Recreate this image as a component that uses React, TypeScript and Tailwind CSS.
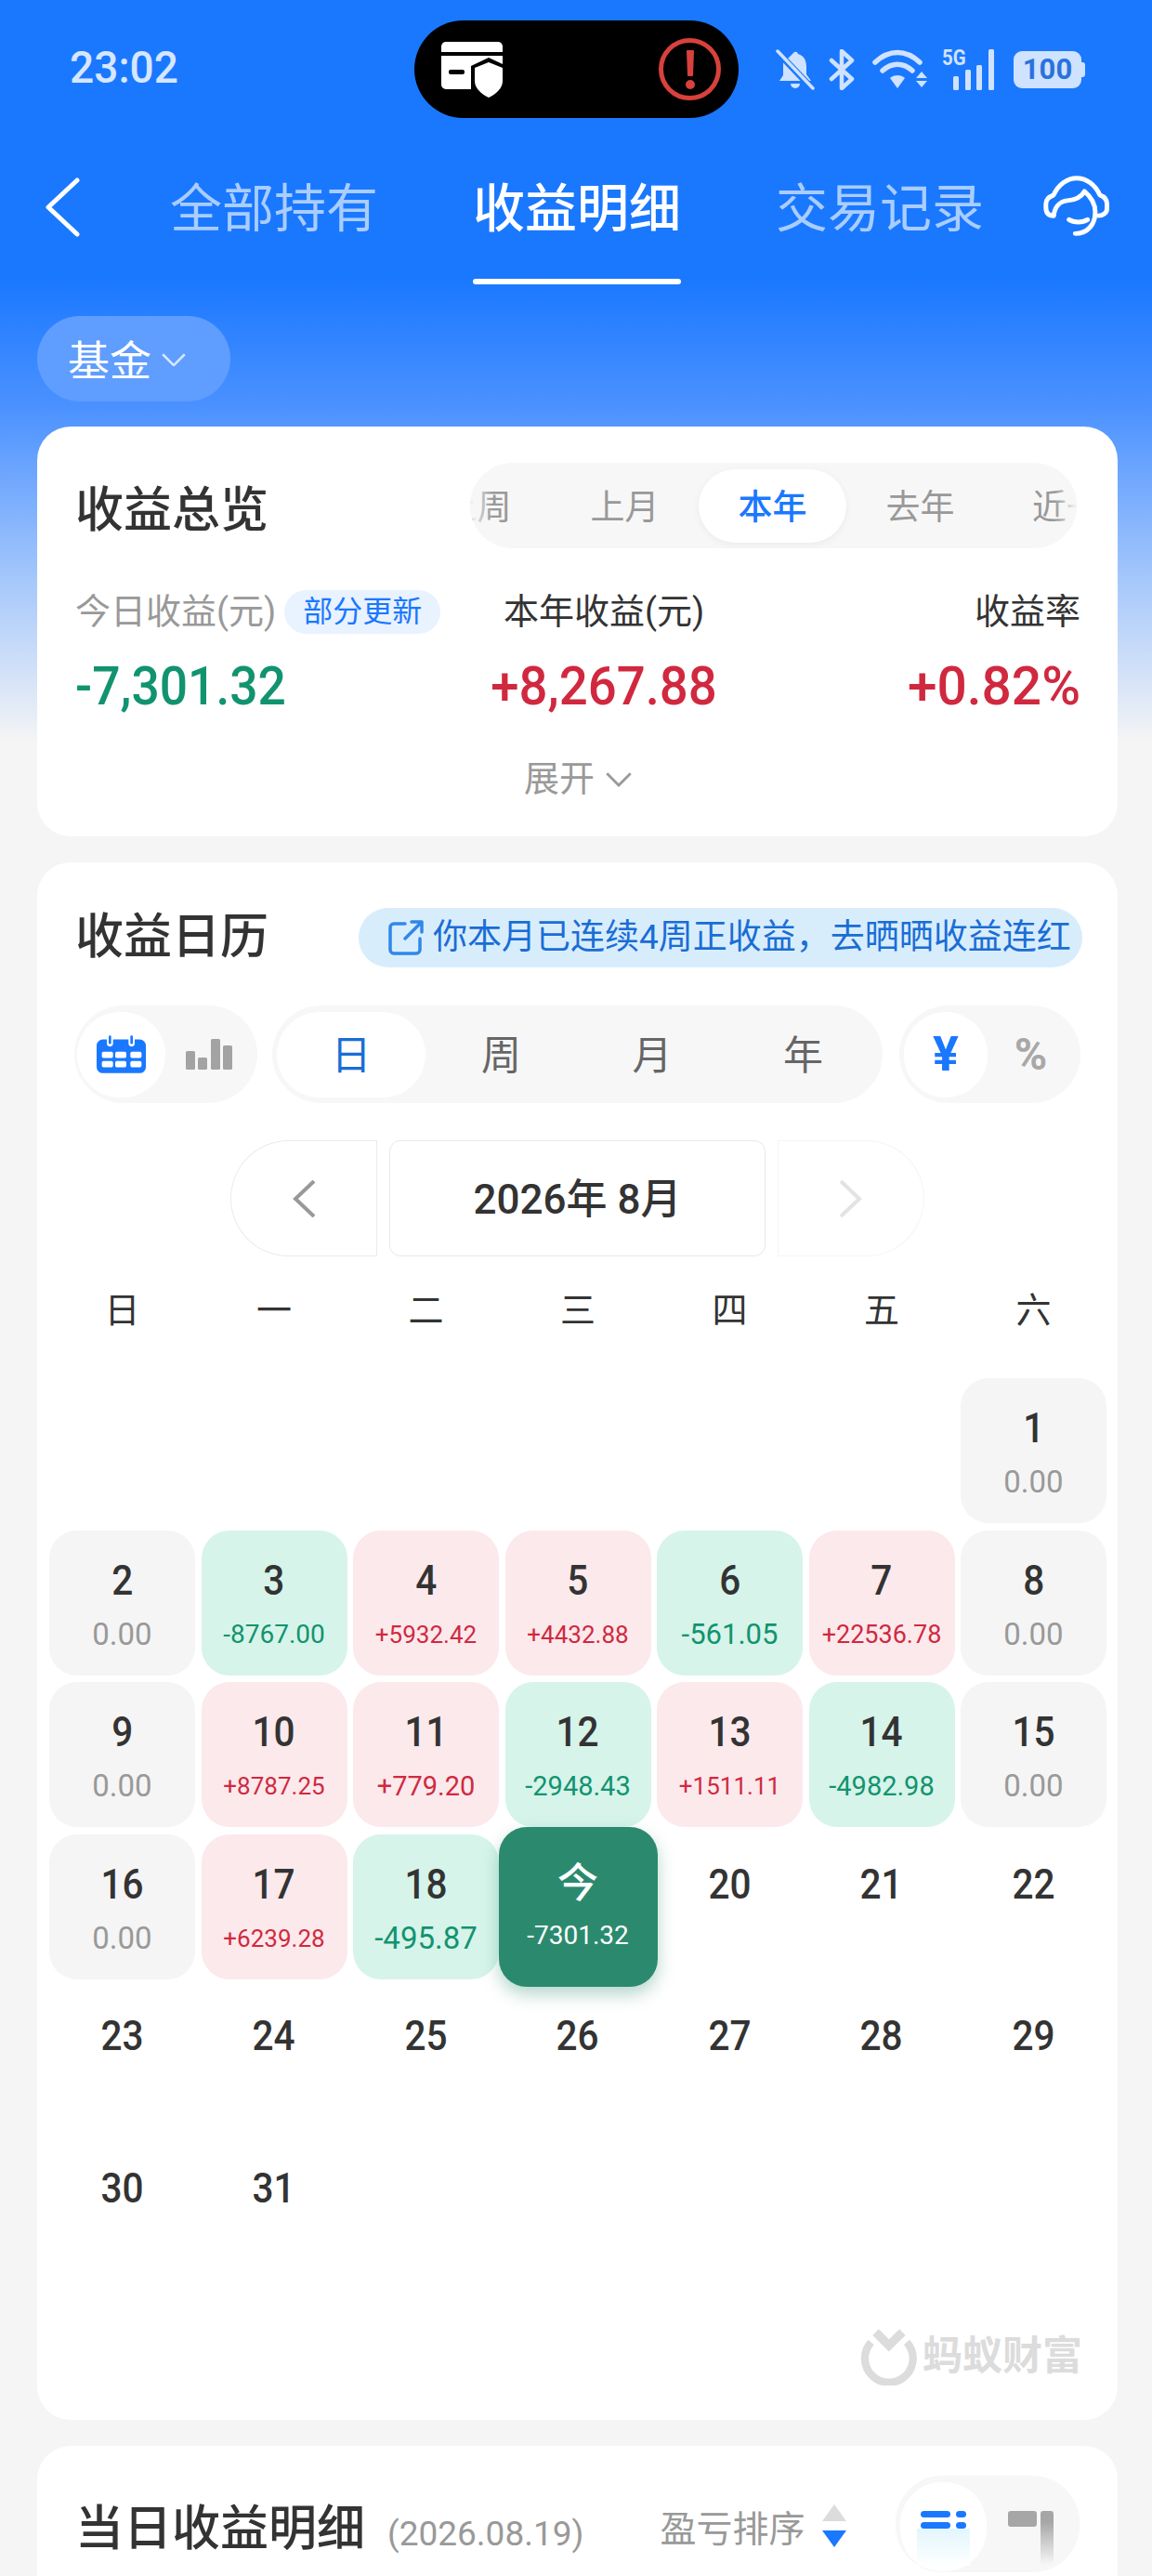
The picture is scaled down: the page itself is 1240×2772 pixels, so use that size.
const cjk = 'font-["Roboto","Noto_Sans_CJK_SC",sans-serif]';

type Day = { d: string; v?: string; kind?: 'gray' | 'red' | 'green' | 'today' | 'none'; size?: string };

const days: (Day | null)[] = [
  null, null, null, null, null, null,
  { d: '1', v: '0.00', kind: 'gray', size: 'text-[33px]' },
  { d: '2', v: '0.00', kind: 'gray', size: 'text-[33px]' },
  { d: '3', v: '-8767.00', kind: 'green', size: 'text-[28px]' },
  { d: '4', v: '+5932.42', kind: 'red', size: 'text-[26px]' },
  { d: '5', v: '+4432.88', kind: 'red', size: 'text-[26px]' },
  { d: '6', v: '-561.05', kind: 'green', size: 'text-[31px]' },
  { d: '7', v: '+22536.78', kind: 'red', size: 'text-[27px]' },
  { d: '8', v: '0.00', kind: 'gray', size: 'text-[33px]' },
  { d: '9', v: '0.00', kind: 'gray', size: 'text-[33px]' },
  { d: '10', v: '+8787.25', kind: 'red', size: 'text-[26px]' },
  { d: '11', v: '+779.20', kind: 'red', size: 'text-[29px]' },
  { d: '12', v: '-2948.43', kind: 'green', size: 'text-[29px]' },
  { d: '13', v: '+1511.11', kind: 'red', size: 'text-[26px]' },
  { d: '14', v: '-4982.98', kind: 'green', size: 'text-[29px]' },
  { d: '15', v: '0.00', kind: 'gray', size: 'text-[33px]' },
  { d: '16', v: '0.00', kind: 'gray', size: 'text-[33px]' },
  { d: '17', v: '+6239.28', kind: 'red', size: 'text-[26px]' },
  { d: '18', v: '-495.87', kind: 'green', size: 'text-[33px]' },
  { d: '今', v: '-7301.32', kind: 'today', size: 'text-[28px]' },
  ...['20', '21', '22', '23', '24', '25', '26', '27', '28', '29', '30', '31'].map((d) => ({ d, kind: 'none' as const })),
];

function DayCell({ day }: { day: Day | null }) {
  if (!day) return <div />;
  if (day.kind === 'today') {
    return (
      <div className="relative z-10 -mx-[7px] -my-[8px] flex flex-col items-center rounded-[30px] bg-[#2b8a6e] pt-[36px] text-white shadow-[0_8px_18px_rgba(43,138,110,0.35)]">
        <div className="text-[44px] leading-[50px] font-medium">{day.d}</div>
        <div className={`mt-[11px] leading-[40px] ${day.size}`}>{day.v}</div>
      </div>
    );
  }
  const tone =
    day.kind === 'gray'
      ? 'bg-[#f5f5f5] text-[#999999]'
      : day.kind === 'red'
        ? 'bg-[#fce9ec] text-[#d0293f]'
        : day.kind === 'green'
          ? 'bg-[#d6f4ea] text-[#12936f]'
          : 'text-[#333333]';
  return (
    <div className={`flex flex-col items-center rounded-[30px] pt-[29px] ${tone}`}>
      <div className="scale-x-[0.9] text-[45px] leading-[50px] font-medium text-[#333333]">{day.d}</div>
      {day.v && <div className={`mt-[13px] leading-[40px] ${day.size}`}>{day.v}</div>}
    </div>
  );
}

function CardShield() {
  return (
    <svg width="66" height="60" viewBox="0 0 66 60" className="shrink-0">
      <path d="M5 0h56a5 5 0 0 1 5 5v6H0V5a5 5 0 0 1 5-5z" fill="#fff" />
      <path d="M0 15h66v9l-15-7-19 9v25H5a5 5 0 0 1-5-5z" fill="#fff" />
      <rect x="8" y="30" width="17" height="5" rx="2" fill="#000" />
      <path d="M51 22l15 6v14c0 8-7 14-15 18-8-4-15-10-15-18V28z" fill="#fff" />
    </svg>
  );
}

function StatusIcons() {
  return (
    <div className="flex items-center text-[#cfe2ff]">
      <svg width="42" height="44" viewBox="0 0 42 44" className="shrink-0">
        <path d="M20 3a3 3 0 0 1 4 2c7 2 9 8 9 14v8l5 7H4l4-6V15z" fill="#cfe2ff" />
        <path d="M16 37h10a5 5 0 0 1-10 0z" fill="#cfe2ff" />
        <path d="M1 2l38 40" stroke="#1a78ff" strokeWidth="7" />
        <path d="M2 2l38 40" stroke="#cfe2ff" strokeWidth="3.5" strokeLinecap="round" />
      </svg>
      <svg width="28" height="44" viewBox="0 0 28 44" className="ml-[15px] shrink-0">
        <path d="M3 12l22 20-11 10V2l11 10L3 32" fill="none" stroke="#cfe2ff" strokeWidth="4.5" strokeLinecap="round" strokeLinejoin="round" />
      </svg>
      <svg width="60" height="44" viewBox="0 0 60 44" className="ml-[19px] shrink-0">
        <path d="M3 14c15-14 33-14 48 0" fill="none" stroke="#cfe2ff" strokeWidth="5.5" strokeLinecap="round" />
        <path d="M11 23c10-9 22-9 32 0" fill="none" stroke="#cfe2ff" strokeWidth="5.5" strokeLinecap="round" />
        <path d="M27 28c3 0 6 1 8 3l-8 11-8-11c2-2 5-3 8-3z" fill="#cfe2ff" />
        <path d="M53 24l6 7H47zM47 34h12l-6 7z" fill="#cfe2ff" />
      </svg>
      <div className="relative ml-[15px] h-[44px] w-[57px] shrink-0">
        <span className="absolute -top-[2px] left-0 origin-left scale-x-[0.85] font-['Roboto',sans-serif] text-[24px] leading-[22px] font-bold">5G</span>
        <svg width="57" height="44" viewBox="0 0 57 44" className="absolute left-0 top-0">
          <rect x="12" y="29" width="6" height="15" rx="1.5" fill="#cfe2ff" />
          <rect x="25" y="22" width="6" height="22" rx="1.5" fill="#cfe2ff" />
          <rect x="37" y="17" width="6" height="27" rx="1.5" fill="#cfe2ff" />
          <rect x="50" y="0" width="6" height="44" rx="1.5" fill="#cfe2ff" />
        </svg>
      </div>
      <div className="relative ml-[20px] flex h-[40px] w-[73px] shrink-0 items-center justify-center rounded-[9px] bg-[#cfe2ff] font-['Roboto',sans-serif] text-[31px] leading-[40px] font-bold text-[#2a72dc]">
        100
        <span className="absolute -right-[4px] top-[12px] h-[16px] w-[4px] rounded-r-[3px] bg-[#cfe2ff]" />
      </div>
    </div>
  );
}

function Headset() {
  return (
    <svg width="80" height="73" viewBox="60 45 240 220" fill="none" stroke="#fff" strokeWidth="15" strokeLinecap="round" strokeLinejoin="round" className="shrink-0">
      <path d="M105 187C85 187 80 175 80 160V148C80 132 92 125 105 120C120 85 150 65 180 65C210 65 240 85 255 120C268 125 278 132 278 148V165C278 178 265 187 250 187" />
      <path d="M105 187C108 165 120 140 150 138C175 136 195 125 205 108C225 125 240 150 240 175C240 215 215 245 175 245" />
      <path d="M155 200C170 210 200 210 215 200" />
    </svg>
  );
}

function Chevron({ className, color, size = 22 }: { className?: string; color: string; size?: number }) {
  return (
    <svg width={size} height={size * 0.55} viewBox="0 0 22 12" fill="none" stroke={color} strokeWidth="2.2" className={className}>
      <path d="M1 1l10 10L21 1" />
    </svg>
  );
}

function AntLogo() {
  return (
    <svg width="67" height="63" viewBox="40 40 200 190" fill="none" className="shrink-0">
      <path d="M80 90A78 78 0 1 0 196 90" stroke="#dcdcdc" strokeWidth="25" />
      <path d="M95 57L138 100L182 57" stroke="#dcdcdc" strokeWidth="28" />
    </svg>
  );
}

export default function App() {
  return (
    <div className={`relative h-[2772px] w-[1240px] overflow-hidden bg-[linear-gradient(180deg,#1a78ff_0px,#1a78ff_300px,#4c92ff_440px,#a8c9fb_630px,#f5f5f5_800px)] ${cjk}`}>
      {/* status bar */}
      <div className="mt-[22px] flex h-[105px] items-center pl-[75px] pr-[73px]">
        <div className="w-[371px] origin-left scale-x-[0.96] pb-[3px] text-[48px] leading-[50px] font-medium text-[#d6e6ff]">23:02</div>
        <div className="flex h-[105px] w-[349px] items-center justify-between rounded-full bg-black pl-[29px] pr-[19px]">
          <CardShield />
          <div className="flex h-[67px] w-[67px] items-center justify-center rounded-full border-[5px] border-[#d8413c] text-[#d8413c]">
            <svg width="12" height="44" viewBox="0 0 12 44">
              <path d="M3 2h6l-1 26H4z" fill="#d8413c" stroke="#d8413c" strokeWidth="2" strokeLinejoin="round" />
              <circle cx="6" cy="38" r="5" fill="#d8413c" />
            </svg>
          </div>
        </div>
        <div className="ml-[40px]">
          <StatusIcons />
        </div>
      </div>

      {/* tabs */}
      <div className="mt-[58px] flex items-start pl-[48px]">
        <svg width="38" height="64" viewBox="0 0 38 64" fill="none" stroke="#fff" strokeWidth="5" strokeLinecap="round" strokeLinejoin="round" className="mt-[6px] shrink-0">
          <path d="M35 3L4 32l31 29" />
        </svg>
        <div className="ml-[97px] mt-[3px] text-[56px] leading-[75px] text-[#a9cdff]">全部持有</div>
        <div className="ml-[102px] flex flex-col items-center">
          <div className="mt-[3px] text-[56px] leading-[75px] font-medium text-white">收益明细</div>
          <div className="mt-[37px] h-[6px] w-[224px] rounded-full bg-white" />
        </div>
        <div className="ml-[102px] mt-[3px] text-[56px] leading-[75px] text-[#a9cdff]">交易记录</div>
        <div className="ml-[60px]">
          <Headset />
        </div>
      </div>

      {/* 基金 filter */}
      <div className="ml-[40px] mt-[34px] flex h-[92px] w-[208px] items-center rounded-full bg-[#5f9dff] pl-[33px] text-[45px] text-white">
        <span className="mt-[7px]">基金</span>
        <Chevron className="ml-[11px] mt-[2px]" color="#d6e6ff" size={26} />
      </div>

      {/* 收益总览 */}
      <div className="ml-[40px] mr-[37px] mt-[27px] h-[441px] rounded-[36px] bg-white pl-[41px] pr-[40px] pt-[39px]">
        <div className="flex h-[92px] items-center justify-between">
          <div className="mt-[12px] text-[52px] leading-[92px] font-medium text-[#333333]">收益总览</div>
          <div className="relative mr-[4px] flex h-[92px] w-[653px] items-center overflow-hidden rounded-full bg-[#f7f7f7] text-[37px] text-[#999999]">
            {['上周', '上月', '本年', '去年', '近一年'].map((t, i) => (
              <div
                key={t}
                className={`flex h-[79px] w-[159px] shrink-0 items-center whitespace-nowrap pt-[6px] ${i === 0 ? '-ml-[72px]' : ''} ${i === 4 ? 'justify-start pl-[41px]' : 'justify-center'} ${t === '本年' ? 'rounded-full bg-white font-medium text-[#1a78ff] shadow-[0_2px_8px_rgba(0,0,0,0.05)]' : ''}`}
              >
                {t}
              </div>
            ))}
            <div className="absolute inset-y-0 left-0 w-[24px] bg-gradient-to-r from-[#f7f7f7] to-transparent" />
            <div className="absolute inset-y-0 right-0 w-[24px] bg-gradient-to-l from-[#f7f7f7] to-transparent" />
          </div>
        </div>
        <div className="mt-[43px] grid grid-cols-[430px_278px_1fr] text-[38px] leading-[50px]">
          <div className="flex items-center text-[#999999]">
            今日收益(元)
            <span className="ml-[9px] rounded-full bg-[#e9f2ff] px-[20px] text-[32px] leading-[47px] text-[#1a78ff]">部分更新</span>
          </div>
          <div className="text-center text-[#333333]">本年收益(元)</div>
          <div className="text-right text-[#333333]">收益率</div>
        </div>
        <div className="mt-[25px] grid grid-cols-[430px_278px_1fr] text-[58px] leading-[60px] font-medium">
          <div className="origin-left scale-x-[0.92] text-[#12936f]">-7,301.32</div>
          <div className="scale-x-[0.94] text-center text-[#d0293f]">+8,267.88</div>
          <div className="origin-right scale-x-[0.98] text-right text-[#d0293f]">+0.82%</div>
        </div>
        <div className="mt-[45px] flex items-center justify-center text-[38px] leading-[50px] text-[#999999]">
          展开
          <Chevron className="ml-[12px] mt-[2px]" color="#999999" size={28} />
        </div>
      </div>

      {/* 收益日历 */}
      <div className="ml-[40px] mr-[37px] mt-[28px] h-[1676px] rounded-[36px] bg-white pt-[49px]">
        <div className="flex items-center justify-between pl-[41px] pr-[38px]">
          <div className="text-[52px] leading-[64px] font-medium text-[#333333]">收益日历</div>
          <div className="flex h-[64px] w-[779px] items-center rounded-full bg-[#d8edfb] pl-[31px] text-[37px] text-[#1a6dd6]">
            <svg width="40" height="40" viewBox="0 0 40 40" fill="none" stroke="#2f87ea" strokeWidth="3.5" strokeLinecap="round" strokeLinejoin="round" className="mr-[9px] shrink-0">
              <path d="M19 5H7a4 4 0 0 0-4 4v24a4 4 0 0 0 4 4h24a4 4 0 0 0 4-4V21" />
              <path d="M26 3h11v11M37 3L19 21" />
            </svg>
            你本月已连续4周正收益，去晒晒收益连红
          </div>
        </div>

        <div className="mt-[41px] flex pl-[40px]">
          <div className="flex h-[105px] w-[197px] items-center rounded-full bg-[#f7f7f7] pl-[3px]">
            <div className="flex h-[92px] w-[95px] items-center justify-center rounded-full bg-white">
              <svg width="55" height="42" viewBox="135 130 165 125">
                <rect x="138" y="143" width="159" height="109" rx="20" fill="#1a78ff" />
                <rect x="171" y="130" width="20" height="36" rx="10" fill="#fff" />
                <rect x="241" y="130" width="20" height="36" rx="10" fill="#fff" />
                <rect x="177" y="130" width="8" height="28" rx="4" fill="#1a78ff" />
                <rect x="247" y="130" width="8" height="28" rx="4" fill="#1a78ff" />
                {[155, 198, 247].map((x) =>
                  [183, 213].map((y) => <rect key={`${x}-${y}`} x={x} y={y} width="36" height="20" rx="5" fill="#fff" />),
                )}
              </svg>
            </div>
            <svg width="50" height="33" viewBox="0 0 50 33" className="ml-[22px] shrink-0">
              <rect x="0" y="13" width="10" height="20" rx="1.5" fill="#a3a3a3" />
              <rect x="13" y="20" width="10" height="13" rx="1.5" fill="#a3a3a3" />
              <rect x="27" y="0" width="10" height="33" rx="1.5" fill="#a3a3a3" />
              <rect x="40" y="7" width="10" height="26" rx="1.5" fill="#a3a3a3" />
            </svg>
          </div>
          <div className="ml-[16px] flex h-[105px] w-[657px] items-center rounded-full bg-[#f7f7f7] pl-[5px] text-[43px] text-[#666666]">
            <div className="flex h-[92px] w-[160px] items-center justify-center rounded-full bg-white pt-[3px] text-[#1a6dd6]">日</div>
            <div className="w-[163px] pt-[3px] text-center">周</div>
            <div className="w-[162px] pt-[3px] text-center">月</div>
            <div className="w-[163px] pt-[3px] text-center">年</div>
          </div>
          <div className="ml-[18px] flex h-[105px] w-[195px] items-center rounded-full bg-[#f7f7f7] pl-[5px] font-bold">
            <div className="flex h-[92px] w-[90px] items-center justify-center rounded-full bg-white text-[52px] text-[#1a78ff]">¥</div>
            <div className="w-[93px] text-center text-[48px] text-[#a8a8a8]">%</div>
          </div>
        </div>

        <div className="mt-[40px] flex justify-center gap-[13px]">
          <div className="flex h-[125px] w-[158px] items-center justify-center rounded-l-full rounded-r-[12px] border border-[#ebebeb]">
            <svg width="26" height="40" viewBox="0 0 26 40" fill="none" stroke="#999999" strokeWidth="4">
              <path d="M24 1L4 20l20 19" />
            </svg>
          </div>
          <div className="flex h-[125px] w-[405px] items-center justify-center rounded-[12px] border border-[#e8e8e8] pt-[3px] text-[44px] font-medium text-[#333333]">2026年 8月</div>
          <div className="flex h-[125px] w-[158px] items-center justify-center rounded-l-[12px] rounded-r-full border border-[#f5f5f5]">
            <svg width="26" height="40" viewBox="0 0 26 40" fill="none" stroke="#e3e3e3" strokeWidth="4">
              <path d="M2 1l20 19L2 39" />
            </svg>
          </div>
        </div>

        <div className="mt-[33px] grid grid-cols-[repeat(7,157px)] gap-x-[6.5px] px-[13px] text-center text-[38px] leading-[50px] text-[#333333]">
          {['日', '一', '二', '三', '四', '五', '六'].map((w) => (
            <div key={w}>{w}</div>
          ))}
        </div>

        <div className="mt-[48px] grid grid-cols-[repeat(7,157px)] auto-rows-[156px] gap-x-[6.5px] gap-y-[7.5px] px-[13px]">
          {days.map((day, i) => (
            <DayCell key={i} day={day} />
          ))}
        </div>

        <div className="mt-[47px] flex items-center justify-end pr-[38px]">
          <AntLogo />
          <div className="ml-[2px] text-[43px] leading-[60px] font-bold text-[#dcdcdc]">蚂蚁财富</div>
        </div>
      </div>

      {/* 当日收益明细 */}
      <div className="ml-[40px] mr-[37px] mt-[28px] h-[300px] rounded-[36px] bg-white pl-[41px] pt-[32px]">
        <div className="flex items-start">
          <div className="mt-[26px] text-[52px] leading-[64px] font-medium text-[#333333]">当日收益明细</div>
          <div className="ml-[24px] mt-[38px] text-[37px] leading-[50px] text-[#999999]">(2026.08.19)</div>
          <div className="ml-[82px] mt-[33px] text-[39px] leading-[50px] text-[#999999]">盈亏排序</div>
          <svg width="28" height="48" viewBox="0 0 28 48" className="ml-[18px] mt-[31px] shrink-0">
            <path d="M14 0l13 18H1z" fill="#dcdcdc" />
            <path d="M1 28h26L14 46z" fill="#1a78ff" />
          </svg>
          <div className="ml-[52px] flex h-[104px] w-[198px] shrink-0 rounded-[50px] bg-[#f7f7f7] pl-[5px] pt-[7px]">
            <div className="flex h-[96px] w-[93px] shrink-0 flex-col items-center rounded-[45px] bg-white pt-[31px]">
              <svg width="49" height="19" viewBox="0 0 49 19" className="shrink-0">
                <rect x="0" y="0" width="32" height="7" rx="3.5" fill="#1a78ff" />
                <rect x="0" y="12" width="32" height="7" rx="3.5" fill="#1a78ff" />
                <rect x="38" y="0" width="11" height="7" rx="3.5" fill="#1a78ff" />
                <rect x="38" y="12" width="11" height="7" rx="3.5" fill="#1a78ff" />
              </svg>
              <div className="h-[40px] w-[57px] bg-gradient-to-b from-[#e2f6fd] to-white" />
            </div>
            <svg width="50" height="58" viewBox="0 0 50 58" className="ml-[23px] mt-[31px] shrink-0">
              <defs>
                <linearGradient id="bar-fade" x1="0" y1="0" x2="0" y2="1">
                  <stop offset="0.2" stopColor="#a6a6a6" />
                  <stop offset="1" stopColor="#f7f7f7" />
                </linearGradient>
              </defs>
              <rect x="0" y="0" width="31" height="17" rx="3" fill="#a6a6a6" />
              <rect x="35" y="0" width="14" height="58" rx="3" fill="url(#bar-fade)" />
            </svg>
          </div>
        </div>
      </div>
    </div>
  );
}
